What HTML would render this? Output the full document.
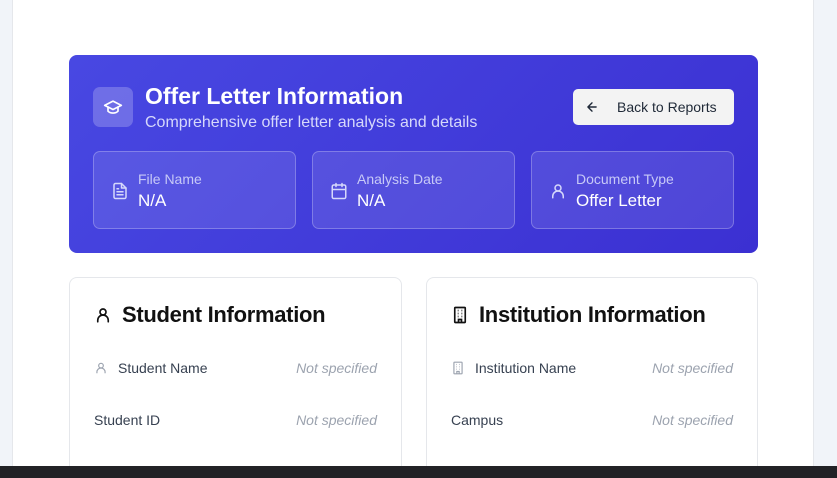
<!DOCTYPE html>
<html><head><meta charset="utf-8"><style>
*{box-sizing:border-box;margin:0;padding:0}
html,body{width:837px;height:478px;overflow:hidden}
body{background:#f1f4f9;font-family:"Liberation Sans",sans-serif;position:relative}
.panel{position:absolute;left:12px;top:-10px;width:802px;height:488px;background:#fff;border:1px solid #e5e7eb;border-radius:10px}
.hero{position:absolute;left:69px;top:55px;width:689px;height:198px;border-radius:8px;background:linear-gradient(135deg,#4848e2,#3b30d2);color:#fff}
.badge{position:absolute;left:24px;top:32px;width:40px;height:40px;border-radius:7px;background:rgba(255,255,255,.22);display:flex;align-items:center;justify-content:center}
.h1{position:absolute;left:76px;top:28px;font-size:23px;font-weight:bold}
.sub{position:absolute;left:76px;top:59px;font-size:16px;color:#d6d8fb}
.btn{position:absolute;left:504px;top:34px;width:161px;height:36px;background:#f3f3f3;border-radius:5px;color:#1f2937;font-size:14px;line-height:36px}
.btn svg{position:absolute;left:12px;top:11px}
.btn span{position:absolute;left:44px}
.tile{position:absolute;top:96px;width:203px;height:78px;border:1px solid rgba(255,255,255,.25);border-radius:7px;background:rgba(255,255,255,.1)}
.tile svg{position:absolute;left:17px;top:30px}
.tile .l{position:absolute;left:44px;top:19px;font-size:14px;color:#c7c9f7}
.tile .v{position:absolute;left:44px;top:39px;font-size:17px;color:#fff}
.card{position:absolute;top:277px;width:333px;height:200px;border:1px solid #e5e7eb;border-bottom:none;border-radius:8px 8px 0 0;background:#fff}
.card h2{position:absolute;left:24px;top:24px;font-size:22px;font-weight:bold;color:#111;letter-spacing:-.3px;display:flex;align-items:center;gap:10px}
.row{position:absolute;left:24px;right:24px;font-size:14px;color:#374151;display:flex;align-items:center}
.row .ns{margin-left:auto;color:#9ca3af;font-style:italic}
.bar{position:absolute;left:0;top:466px;width:837px;height:12px;background:#222226}
</style></head><body>
<div class="panel"></div>
<div class="hero">
 <div class="badge"><svg width="20" height="20" viewBox="0 0 24 24" fill="none" stroke="#fff" stroke-width="2" stroke-linecap="round" stroke-linejoin="round"><path d="M22 10 12 5 2 10l10 5 10-5z"/><path d="M6 12v5c3 3 9 3 12 0v-5"/></svg></div>
 <div class="h1">Offer Letter Information</div>
 <div class="sub">Comprehensive offer letter analysis and details</div>
 <div class="btn"><svg width="14" height="14" viewBox="0 0 24 24" fill="none" stroke="#1f2937" stroke-width="2.4" stroke-linecap="round" stroke-linejoin="round"><path d="M19 12H5M12 19l-7-7 7-7"/></svg><span>Back to Reports</span></div>
 <div class="tile" style="left:24px"><svg width="18" height="18" viewBox="0 0 24 24" fill="none" stroke="#d6d8fb" stroke-width="2" stroke-linecap="round" stroke-linejoin="round"><path d="M14 2H6a2 2 0 0 0-2 2v16a2 2 0 0 0 2 2h12a2 2 0 0 0 2-2V8z"/><path d="M14 2v6h6M8 13h8M8 17h8M8 9h2"/></svg><div class="l">File Name</div><div class="v">N/A</div></div>
 <div class="tile" style="left:243px"><svg width="18" height="18" viewBox="0 0 24 24" fill="none" stroke="#d6d8fb" stroke-width="2" stroke-linecap="round" stroke-linejoin="round"><rect x="3" y="4" width="18" height="18" rx="2"/><path d="M16 2v4M8 2v4M3 10h18"/></svg><div class="l">Analysis Date</div><div class="v">N/A</div></div>
 <div class="tile" style="left:462px"><svg width="18" height="18" viewBox="0 0 24 24" fill="none" stroke="#d6d8fb" stroke-width="2" stroke-linecap="round" stroke-linejoin="round"><circle cx="12" cy="8" r="4"/><path d="M5 21v-2a7 7 0 0 1 14 0v2"/></svg><div class="l">Document Type</div><div class="v">Offer Letter</div></div>
</div>
<div class="card" style="left:69px">
 <h2><svg width="18" height="18" viewBox="0 0 24 24" fill="none" stroke="#111" stroke-width="2.2" stroke-linecap="round"><circle cx="12" cy="8" r="4"/><path d="M5 21v-2a7 7 0 0 1 14 0v2"/></svg>Student Information</h2>
 <div class="row" style="top:82px"><svg width="14" height="14" viewBox="0 0 24 24" fill="none" stroke="#9ca3af" stroke-width="2"><circle cx="12" cy="8" r="4"/><path d="M5 21v-2a7 7 0 0 1 14 0v2"/></svg><span style="margin-left:10px">Student Name</span><span class="ns">Not specified</span></div>
 <div class="row" style="top:134px"><span>Student ID</span><span class="ns">Not specified</span></div>
</div>
<div class="card" style="left:426px;width:332px">
 <h2><svg width="18" height="18" viewBox="0 0 24 24" fill="none" stroke="#111" stroke-width="2.2"><rect x="5" y="2" width="14" height="20" rx="1"/><path d="M9 6h1M14 6h1M9 10h1M14 10h1M9 14h1M14 14h1M10 22v-4h4v4"/></svg>Institution Information</h2>
 <div class="row" style="top:82px"><svg width="14" height="14" viewBox="0 0 24 24" fill="none" stroke="#9ca3af" stroke-width="2"><rect x="5" y="2" width="14" height="20" rx="1"/><path d="M9 6h1M14 6h1M9 10h1M14 10h1M9 14h1M14 14h1M10 22v-4h4v4"/></svg><span style="margin-left:10px">Institution Name</span><span class="ns">Not specified</span></div>
 <div class="row" style="top:134px"><span>Campus</span><span class="ns">Not specified</span></div>
</div>
<div class="bar"></div>
</body></html>
